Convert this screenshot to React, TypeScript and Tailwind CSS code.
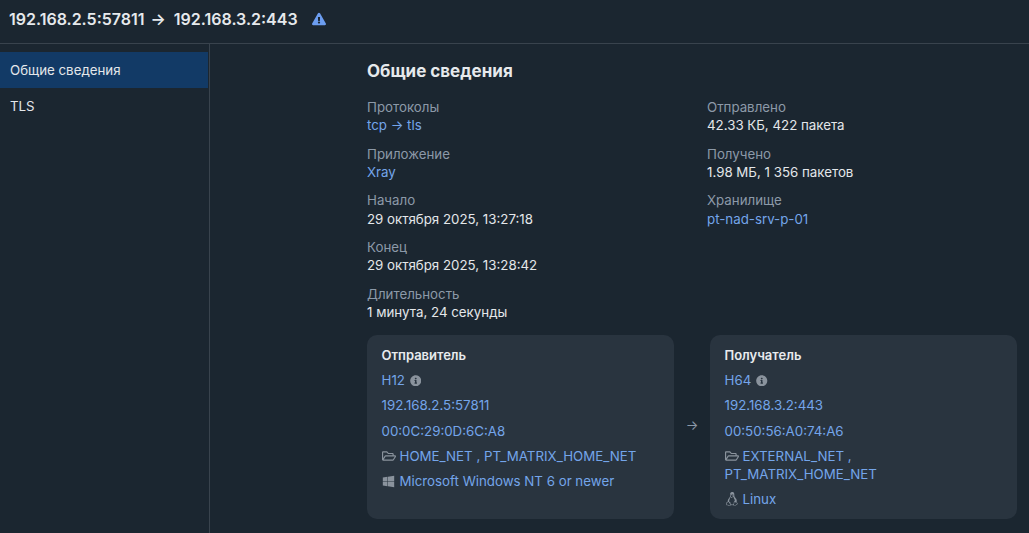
import { FaExclamationTriangle, FaInfoCircle, FaRegFolderOpen, FaWindows } from 'react-icons/fa';
import { VscTerminalLinux } from 'react-icons/vsc';

function Field({ label, children }: { label: string; children: React.ReactNode }) {
    return (
        <div className="leading-[18.2px]">
            <div className="text-[#8c99a8]">{label}</div>
            <div>{children}</div>
        </div>
    );
}

function Lnk({ children }: { children: React.ReactNode }) {
    return <span className="text-[#74a5ea]">{children}</span>;
}

function Node({ title, children }: { title: string; children: React.ReactNode }) {
    return (
        <div className="flex-1 bg-[#29343f] rounded-[10px] px-[14.5px] pt-[11px] h-[184px] flex flex-col gap-[7px] leading-[18.2px]">
            <div className="font-semibold text-[#e8ebee] text-[13px]">{title}</div>
            {children}
        </div>
    );
}

export default function App() {
    return (
        <div className="h-[533px] w-[1029px] overflow-hidden bg-[#1b2630] text-[13.3px] text-[#e4e7ea] font-['Inter',sans-serif] flex flex-col">
            <div className="h-[44px] shrink-0 border-b border-[#39434d] pl-[9px] flex items-center pb-[6px]">
                <span className="font-semibold text-[16px] text-[#e6e9ec]">192.168.2.5:57811</span>
                <span className="font-semibold text-[16px] text-[#e6e9ec] ml-[6px]">→</span>
                <span className="font-semibold text-[16px] text-[#e6e9ec] ml-[8px]">192.168.3.2:443</span>
                <FaExclamationTriangle className="ml-[14px] text-[#6c9df0] w-[14px] h-[14px]" />
            </div>
            <div className="flex flex-1 min-h-0">
                <div className="w-[210px] shrink-0 border-r border-[#39434d] pt-[8px] pr-[1px]">
                    <div className="h-[36px] bg-[#123a66] pl-[10px] pt-[2px] flex items-center">Общие сведения</div>
                    <div className="h-[36px] pl-[10px] pt-[2px] flex items-center">TLS</div>
                </div>
                <div className="flex-1 pl-[157px] pr-[12px] pt-[16px]">
                    <h1 className="font-bold text-[17px] leading-[22px] text-[#e6e9ec]">Общие сведения</h1>
                    <div className="flex mt-[15.7px]">
                        <div className="w-[340px] flex flex-col gap-[10.45px]">
                            <Field label="Протоколы"><Lnk>tcp → tls</Lnk></Field>
                            <Field label="Приложение"><Lnk>Xray</Lnk></Field>
                            <Field label="Начало">29 октября 2025, 13:27:18</Field>
                            <Field label="Конец">29 октября 2025, 13:28:42</Field>
                            <Field label="Длительность">1 минута, 24 секунды</Field>
                        </div>
                        <div className="flex flex-col gap-[10.45px]">
                            <Field label="Отправлено">42.33 КБ, 422 пакета</Field>
                            <Field label="Получено">1.98 МБ, 1 356 пакетов</Field>
                            <Field label="Хранилище"><Lnk>pt-nad-srv-p-01</Lnk></Field>
                        </div>
                    </div>
                    <div className="flex mt-[13.6px]">
                        <Node title="Отправитель">
                            <div className="flex items-center gap-[5px]"><Lnk>H12</Lnk><FaInfoCircle className="w-[11.5px] h-[11.5px] text-[#8a939d]" /></div>
                            <Lnk>192.168.2.5:57811</Lnk>
                            <Lnk>00:0C:29:0D:6C:A8</Lnk>
                            <div className="flex items-center gap-[4px]"><FaRegFolderOpen className="w-[14px] h-[14px] text-[#8a939d]" /><Lnk>HOME_NET , PT_MATRIX_HOME_NET</Lnk></div>
                            <div className="flex items-center gap-[5px]"><FaWindows className="w-[13px] h-[13px] text-[#8a939d]" /><Lnk>Microsoft Windows NT 6 or newer</Lnk></div>
                        </Node>
                        <div className="w-[36px] flex items-center justify-center text-[#8c99a8] pb-[2px]">→</div>
                        <Node title="Получатель">
                            <div className="flex items-center gap-[5px]"><Lnk>H64</Lnk><FaInfoCircle className="w-[11.5px] h-[11.5px] text-[#8a939d]" /></div>
                            <Lnk>192.168.3.2:443</Lnk>
                            <Lnk>00:50:56:A0:74:A6</Lnk>
                            <div>
                                <FaRegFolderOpen className="inline w-[14px] h-[14px] text-[#8a939d] mr-[4px] align-[-2px]" />
                                <Lnk>EXTERNAL_NET , PT_MATRIX_HOME_NET</Lnk>
                            </div>
                            <div className="flex items-center gap-[4px]"><VscTerminalLinux className="w-[14px] h-[14px] text-[#8a939d]" /><Lnk>Linux</Lnk></div>
                        </Node>
                    </div>
                </div>
            </div>
        </div>
    );
}
